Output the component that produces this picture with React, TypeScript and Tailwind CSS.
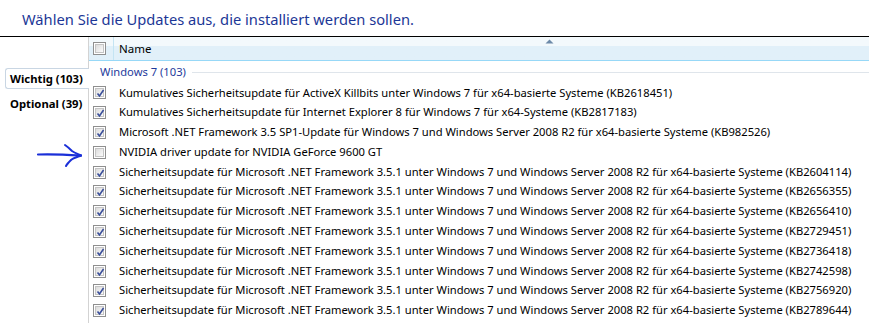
import React from 'react';

type Update = { title: string; checked: boolean };

const updates: Update[] = [
    { title: 'Kumulatives Sicherheitsupdate für ActiveX Killbits unter Windows 7 für x64-basierte Systeme (KB2618451)', checked: true },
    { title: 'Kumulatives Sicherheitsupdate für Internet Explorer 8 für Windows 7 für x64-Systeme (KB2817183)', checked: true },
    { title: 'Microsoft .NET Framework 3.5 SP1-Update für Windows 7 und Windows Server 2008 R2 für x64-basierte Systeme (KB982526)', checked: true },
    { title: 'NVIDIA driver update for NVIDIA GeForce 9600 GT', checked: false },
    ...['KB2604114', 'KB2656355', 'KB2656410', 'KB2729451', 'KB2736418', 'KB2742598', 'KB2756920', 'KB2789644'].map((kb) => ({
        title: `Sicherheitsupdate für Microsoft .NET Framework 3.5.1 unter Windows 7 und Windows Server 2008 R2 für x64-basierte Systeme (${kb})`,
        checked: true,
    })),
];

const CheckBox: React.FC<{ checked: boolean }> = ({ checked }) => (
    <div className="size-[13px] border border-[#8f8f8f] bg-white p-[1px] flex-shrink-0">
        <div className="size-full border border-[#c4c4c4] bg-gradient-to-br from-[#dcdcdc] to-[#fbfbfb] relative">
            {checked && (
                <svg className="absolute -left-[1px] -top-[1px]" width="11" height="11" viewBox="0 0 11 11">
                    <path d="M2.5 5.5 L4.5 8 L8.5 2" fill="none" stroke="#3b4f9a" strokeWidth="1.6" />
                </svg>
            )}
        </div>
    </div>
);

const App: React.FC = () => {
    return (
        <div className="w-[869px] h-[323px] bg-white overflow-hidden font-['Noto_Sans',sans-serif] text-black">
            <div className="h-[36px] pl-[22px] pt-[9px] text-[14.7px] leading-[20px] text-[#1c3796]">
                Wählen Sie die Updates aus, die installiert werden sollen.
            </div>
            <div className="h-[1px] bg-black" />

            <div className="flex h-[286px]">
                {/* left category tabs */}
                <div className="w-[88px] flex-shrink-0 relative">
                    <div className="h-[31px]" />
                    <div className="ml-[5px] h-[21px] border border-r-0 border-[#c9d6e3] rounded-l-[3px] bg-white flex items-center pl-[4px] text-[11.3px] font-bold leading-none relative -mr-[1px] z-10">
                        Wichtig (103)
                    </div>
                    <div className="h-[4px]" />
                    <div className="ml-[5px] h-[21px] flex items-center pl-[5px] text-[11.3px] font-bold leading-none">
                        Optional (39)
                    </div>

                    <svg className="absolute left-[34px] top-[104px]" width="52" height="30" viewBox="0 0 52 30">
                        <path d="M4 13.5 C16 13, 30 13.5, 47 14.5" fill="none" stroke="#1a2fd8" strokeWidth="2.2" strokeLinecap="round" />
                        <path d="M31 4 C34 6, 36 8, 38 10 C41 12, 44 13, 47 14.5" fill="none" stroke="#1a2fd8" strokeWidth="2" strokeLinecap="round" />
                        <path d="M47 14.5 C43 16, 39 17, 37 19 C35 21, 33 23, 32 25" fill="none" stroke="#1a2fd8" strokeWidth="2" strokeLinecap="round" />
                    </svg>
                </div>

                {/* update list */}
                <div className="flex-1 border-l border-[#d3d3d3]">
                    <div className="h-[24px] flex border-b border-[#97d8f7] bg-gradient-to-b from-[#f3f9fc] from-40% to-[#e1f0f9] to-40% relative">
                        <div className="w-[25px] flex items-center pl-[4px] border-r border-[#c4e4f3]">
                            <CheckBox checked={false} />
                        </div>
                        <div className="flex items-center pl-[5px] text-[11.5px]">Name</div>
                        <svg className="absolute left-[456px] top-[2px]" width="9" height="5" viewBox="0 0 9 5">
                            <path d="M0.5 4.5 L4.5 0.5 L8.5 4.5 Z" fill="#6d8aa8" />
                        </svg>
                    </div>

                    <div className="h-[22px] flex items-center pl-[11px] gap-[6px]">
                        <span className="text-[11.2px] text-[#1e3a9c] whitespace-nowrap">Windows 7 (103)</span>
                        <div className="flex-1 h-[1px] bg-[#dfe5eb]" />
                    </div>

                    {updates.map((u, i) => (
                        <div key={i} className="h-[19.8px] flex items-center pl-[4px]">
                            <CheckBox checked={u.checked} />
                            <span className="ml-[13px] text-[11.2px] whitespace-nowrap">{u.title}</span>
                        </div>
                    ))}
                </div>
            </div>
        </div>
    );
};

export default App;
